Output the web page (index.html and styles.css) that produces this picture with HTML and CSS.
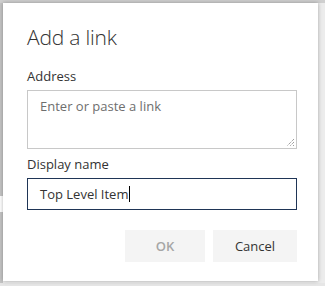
FILE: index.html
```html
<!DOCTYPE html>
<html>
<head>
<meta charset="utf-8">
<link rel="stylesheet" href="styles.css">
</head>
<body>
<div class="stage">
  <div class="side">
    <div class="side-seg side-top"></div>
    <div class="side-gap"></div>
    <div class="side-seg side-bottom"></div>
  </div>
  <div class="dialog">
    <h1 class="title">Add a link</h1>
    <label class="label">Address</label>
    <div class="textarea">
      <span class="placeholder">Enter or paste a link</span>
      <svg class="grip" width="9" height="9" viewBox="0 0 9 9">
        <path d="M8 1 L1 8 M8 4 L4 8 M8 7 L7 8" stroke="#777" stroke-width="1" stroke-dasharray="1 1" fill="none"/>
      </svg>
    </div>
    <label class="label label-second">Display name</label>
    <div class="input"><span class="value">Top Level Item</span><span class="caret"></span></div>
    <div class="actions">
      <button class="btn btn-disabled">OK</button>
      <button class="btn">Cancel</button>
    </div>
  </div>
</div>
</body>
</html>
```
FILE: styles.css
```css
html, body {
  margin: 0;
  padding: 0;
}
body {
  width: 325px;
  height: 286px;
  overflow: hidden;
  background: #e6e6e6;
  font-family: "Open Sans", "Noto Sans", sans-serif;
}
.stage {
  display: flex;
  padding-top: 3px;
  height: 283px;
  box-sizing: border-box;
  background: linear-gradient(#cfcfcf, #cfcfcf) top / 100% 3px no-repeat, #ececec;
}
.side {
  width: 3px;
  display: flex;
  flex-direction: column;
}
.side-seg {
  background: #c4c4c4;
}
.side-top { height: 193px; }
.side-gap { height: 16px; background: #fff; }
.side-bottom { flex: 1; }
.dialog {
  width: 315px;
  height: 278px;
  background: #fff;
  box-sizing: border-box;
  padding: 19px 21px 0 24px;
  box-shadow: 0 0 4px rgba(0,0,0,0.3);
  display: flex;
  flex-direction: column;
}
.title {
  margin: 0;
  font-weight: 300;
  font-size: 21px;
  line-height: 30px;
  color: #333;
  letter-spacing: -0.2px;
}
.label {
  display: block;
  font-size: 13px;
  line-height: 18px;
  color: #333;
  margin-top: 15px;
}
.label-second {
  margin-top: 6px;
}
.textarea {
  margin-top: 5px;
  height: 59px;
  border: 1px solid #c8c8c8;
  box-sizing: border-box;
  position: relative;
  padding: 3px 12px;
}
.placeholder {
  font-size: 13px;
  line-height: 18px;
  color: #6e6e6e;
}
.grip {
  position: absolute;
  right: 1px;
  bottom: 1px;
}
.input {
  margin-top: 5px;
  height: 32px;
  border: 1px solid #1f3556;
  box-sizing: border-box;
  padding: 0 12px;
  display: flex;
  align-items: center;
}
.value {
  font-size: 13px;
  color: #333;
}
.caret {
  width: 1px;
  height: 16px;
  background: #000;
  margin-left: 1px;
}
.actions {
  display: flex;
  justify-content: flex-end;
  gap: 8px;
  margin-top: 20px;
}
.btn {
  height: 32px;
  border: 0;
  background: #f4f4f4;
  font-family: inherit;
  font-size: 13px;
  font-weight: 400;
  color: #333;
  padding: 0;
  width: 84px;
}
.btn-disabled {
  width: 80px;
  color: #a6a6a6;
  font-weight: 600;
}
```
